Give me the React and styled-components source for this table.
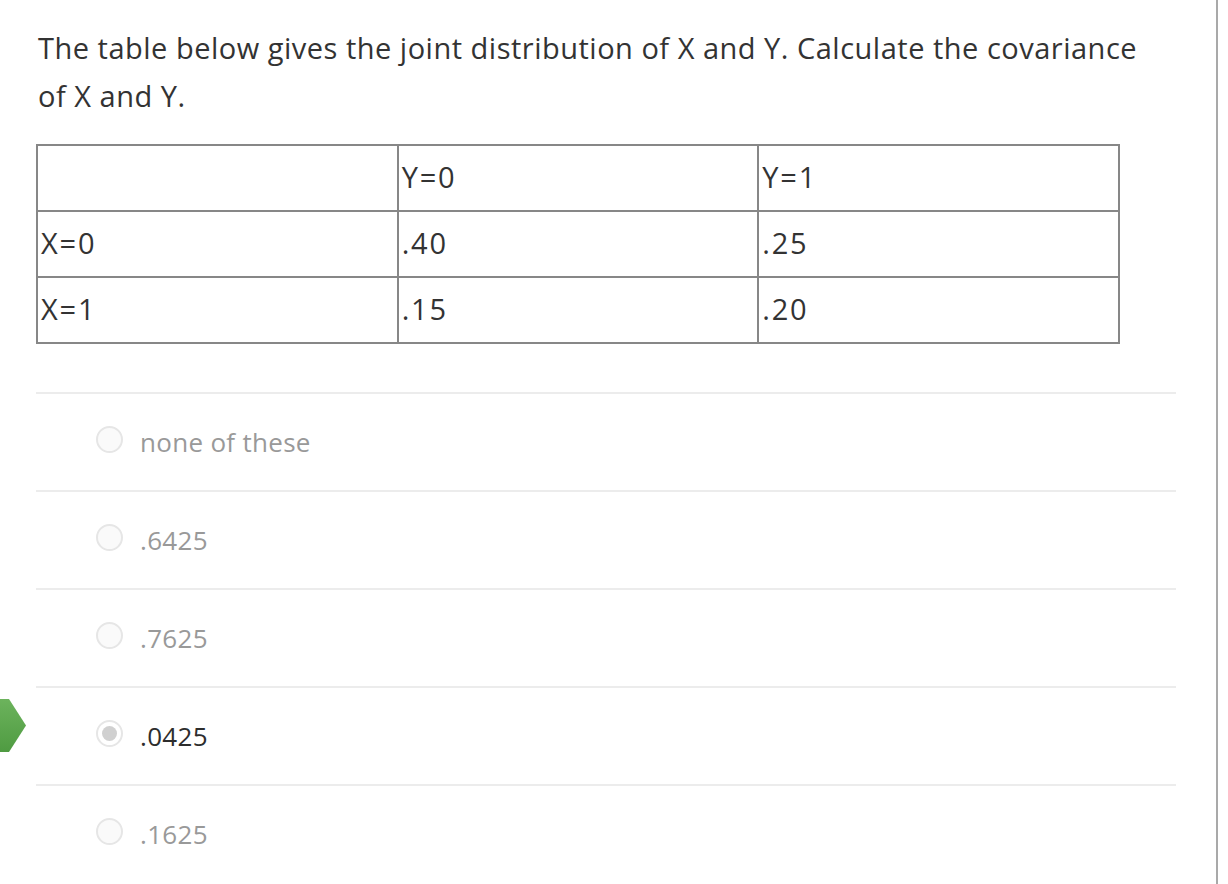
import React from "react";
import styled, { createGlobalStyle } from "styled-components";

const Global = createGlobalStyle`
  html, body { margin: 0; padding: 0; background: #fff; }
  body { font-family: "Open Sans", "Lato", sans-serif; color: #333; }
`;

const Page = styled.div`
  display: flex;
  width: 1228px;
  height: 884px;
  overflow: hidden;
`;

const Content = styled.main`
  width: 1140px;
  padding-left: 36px;
  flex: none;
`;

const ScrollEdge = styled.div`
  margin-left: 40px;
  width: 2px;
  background: #a9a9a9;
  align-self: stretch;
  flex: none;
`;

const Question = styled.p`
  margin: 24px 0 0 2px;
  font-size: 29px;
  letter-spacing: 0.5px;
  line-height: 48px;
  color: #333;
  max-width: 1125px;
`;

const Table = styled.table`
  margin-top: 24px;
  width: 1084px;
  border-collapse: collapse;
  table-layout: fixed;
  border: 2px solid #878787;
`;

const Cell = styled.td`
  border: 2px solid #878787;
  height: 61px;
  padding: 0 3px 3px;
  font-size: 29px;
  letter-spacing: 1.8px;
  color: #333;
  vertical-align: middle;
`;

const Options = styled.ul`
  list-style: none;
  margin: 48px 0 0;
  padding: 0;
`;

const Option = styled.li`
  position: relative;
  display: flex;
  align-items: center;
  height: 96px;
  border-top: 2px solid #ececec;
  padding-left: 60px;
  gap: 17px;
`;

const Radio = styled.span`
  width: 23px;
  height: 23px;
  border-radius: 50%;
  border: 2px solid #e6e6e6;
  background: ${(p) => (p.checked ? "#fff" : "#fafafa")};
  display: flex;
  align-items: center;
  justify-content: center;
  margin-top: -5px;
  flex: none;
  &::after {
    content: "";
    display: ${(p) => (p.checked ? "block" : "none")};
    width: 15px;
    height: 15px;
    border-radius: 50%;
    background: #d0d0d0;
  }
`;

const Label = styled.span`
  font-size: 26px;
  letter-spacing: 0.3px;
  color: ${(p) => (p.checked ? "#2d2d2d" : "#999")};
`;

const Marker = styled.svg`
  position: absolute;
  left: -36px;
  top: 10px;
`;

const rows = [
  ["", "Y=0", "Y=1"],
  ["X=0", ".40", ".25"],
  ["X=1", ".15", ".20"],
];

const options = [
  { text: "none of these" },
  { text: ".6425" },
  { text: ".7625" },
  { text: ".0425", checked: true },
  { text: ".1625" },
];

export default function App() {
  return (
    <>
      <Global />
      <Page>
        <Content>
          <Question>
            The table below gives the joint distribution of X and Y. Calculate the covariance of X and Y.
          </Question>
          <Table>
            <tbody>
              {rows.map((r, i) => (
                <tr key={i}>
                  {r.map((c, j) => (
                    <Cell key={j}>{c}</Cell>
                  ))}
                </tr>
              ))}
            </tbody>
          </Table>
          <Options>
            {options.map((o) => (
              <Option key={o.text}>
                {o.checked && (
                  <Marker width="28" height="56" viewBox="0 0 28 56">
                    <defs>
                      <linearGradient id="mg" x1="0" y1="0" x2="0" y2="1">
                        <stop offset="0" stopColor="#6cb35c" />
                        <stop offset="1" stopColor="#4f9b42" />
                      </linearGradient>
                    </defs>
                    <path d="M0 1 H9 L26 27.5 L9 54 H0 Z" fill="url(#mg)" />
                  </Marker>
                )}
                <Radio checked={o.checked} />
                <Label checked={o.checked}>{o.text}</Label>
              </Option>
            ))}
          </Options>
        </Content>
        <ScrollEdge />
      </Page>
    </>
  );
}
